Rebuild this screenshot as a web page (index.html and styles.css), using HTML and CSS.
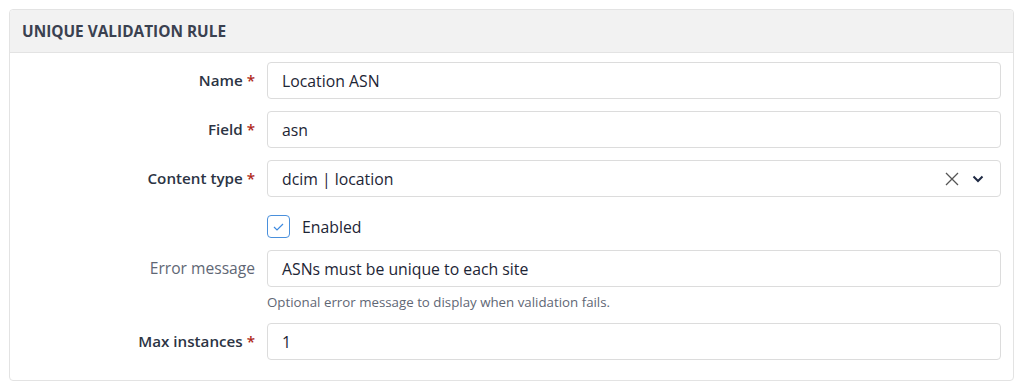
FILE: index.html
```html
<!DOCTYPE html>
<html>
<head>
<meta charset="utf-8">
<link rel="stylesheet" href="styles.css">
</head>
<body>
<div class="card">
  <div class="card-header">Unique Validation Rule</div>
  <div class="card-body">
    <div class="row">
      <label class="lbl required">Name <span class="ast">*</span></label>
      <div class="ctl"><div class="input">Location ASN</div></div>
    </div>
    <div class="row">
      <label class="lbl required">Field <span class="ast">*</span></label>
      <div class="ctl"><div class="input">asn</div></div>
    </div>
    <div class="row">
      <label class="lbl required">Content type <span class="ast">*</span></label>
      <div class="ctl">
        <div class="input select">
          <span class="sel-text">dcim | location</span>
          <svg class="clear" width="14" height="14" viewBox="0 0 14 14"><path d="M1 1L13 13M13 1L1 13" stroke="#555" stroke-width="1.3" fill="none"/></svg>
          <svg class="chev" width="12" height="8" viewBox="0 0 12 8"><path d="M1.5 1.5L6 6L10.5 1.5" stroke="#1f2a44" stroke-width="2" fill="none"/></svg>
        </div>
      </div>
    </div>
    <div class="row check-row">
      <div class="lbl"></div>
      <div class="ctl check">
        <span class="box"><svg width="13" height="10" viewBox="0 0 13 10"><path d="M2 5L5 8L11 2" stroke="#3d8ae0" stroke-width="1.2" fill="none"/></svg></span>
        <span class="check-label">Enabled</span>
      </div>
    </div>
    <div class="row">
      <label class="lbl optional">Error message</label>
      <div class="ctl">
        <div class="input">ASNs must be unique to each site</div>
        <div class="help">Optional error message to display when validation fails.</div>
      </div>
    </div>
    <div class="row last">
      <label class="lbl required">Max instances <span class="ast">*</span></label>
      <div class="ctl"><div class="input">1</div></div>
    </div>
  </div>
</div>
</body>
</html>
```

FILE: styles.css
```css
* { box-sizing: border-box; }
body {
  margin: 0;
  padding: 9px 10px 0 9px;
  background: #fff;
  font-family: "Open Sans", "Noto Sans", sans-serif;
  color: #1d2535;
}
.card {
  border: 1px solid #e3e3e3;
  border-radius: 4px;
  width: 1005px;
  height: 372px;
}
.card-header {
  background: #f2f2f2;
  border-bottom: 1px solid #e3e3e3;
  height: 43px;
  padding: 0 12px;
  display: flex;
  align-items: center;
  text-transform: uppercase;
  font-weight: 700;
  font-size: 15.4px;
  color: #3a4150;
  border-radius: 4px 4px 0 0;
}
.card-body {
  padding: 9px 12px 12px 12px;
}
.row {
  display: grid;
  grid-template-columns: 245px 1fr;
  margin-bottom: 12px;
}
.row.last { margin-bottom: 0; }
.lbl {
  text-align: right;
  padding-right: 12px;
  font-size: 15.6px;
  line-height: 36px;
  height: 36px;
  color: #2c3444;
}
.lbl.required { font-weight: 600; font-size: 15.2px; }
.lbl.optional { color: #5f6775; }
.ast { color: #b0281a; font-weight: 600; }
.input {
  height: 37px;
  border: 1px solid #dcdcdc;
  border-radius: 4px;
  padding: 0 14px;
  display: flex;
  align-items: center;
  font-size: 15.8px;
  color: #1d2535;
  background: #fff;
}
.select .sel-text { flex: 1; }
.select .clear { margin-right: 13px; }
.select .chev { margin-right: 2px; }
.check-row { height: 29px; }
.check {
  display: flex;
  align-items: center;
  height: 23px;
  margin-top: 6px;
}
.box {
  width: 23px;
  height: 23px;
  border: 1.5px solid #4a90dc;
  border-radius: 4px;
  display: flex;
  align-items: center;
  justify-content: center;
  margin-right: 12px;
}
.check-label { font-size: 15.8px; color: #1d2535; }
.help {
  font-size: 13.3px;
  color: #5f6775;
  margin-top: 6px;
  line-height: 18px;
}
```
